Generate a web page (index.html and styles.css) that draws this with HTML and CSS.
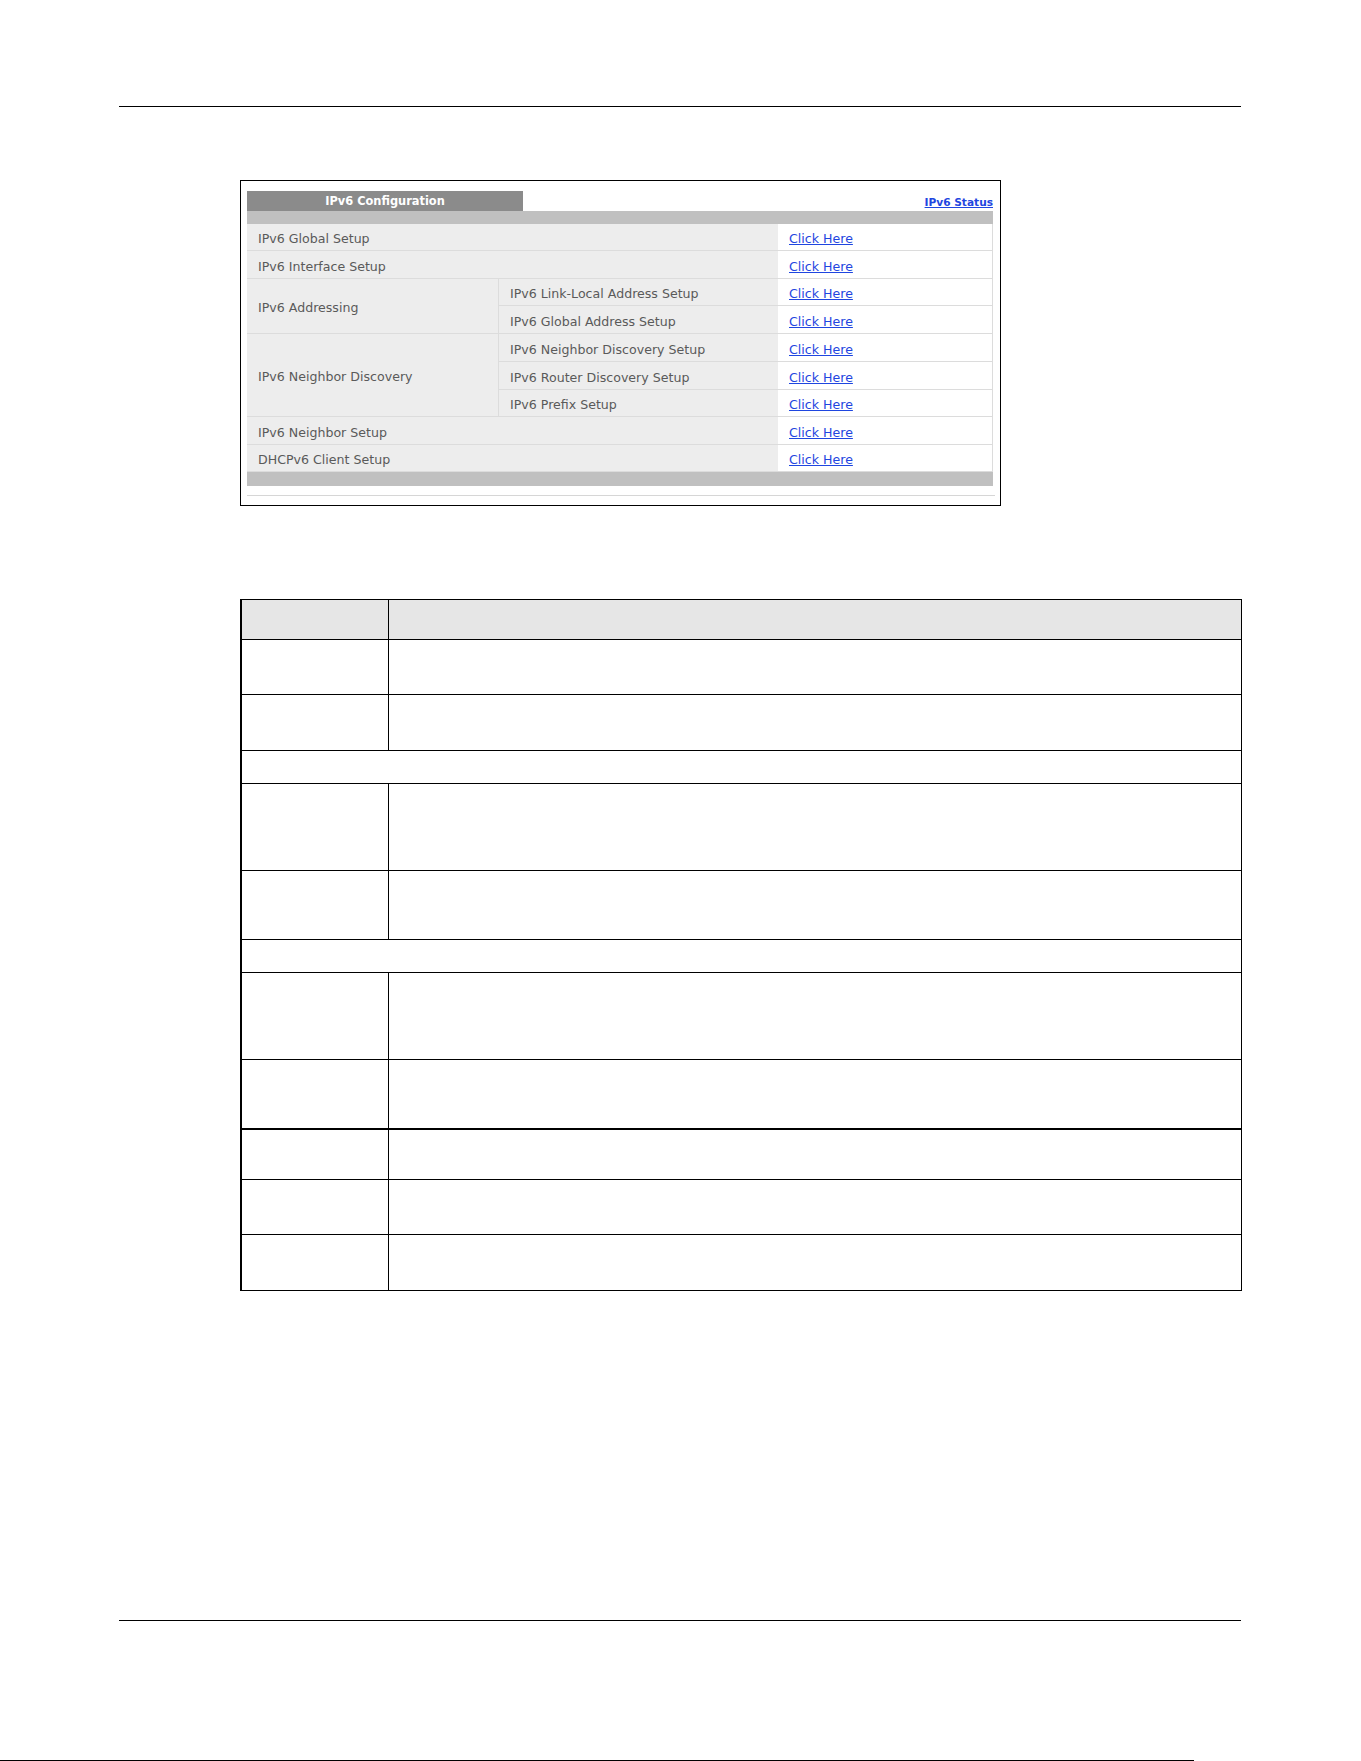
FILE: index.html
```html
<!DOCTYPE html>
<html lang="en">
<head>
  <title>IPv6 Configuration</title>
  <link rel="stylesheet" href="styles.css">
</head>
<body>
<div class="page">

  <div class="rule-top"></div>

  <!-- screen capture of the web configurator -->
  <div class="shot">
    <div class="tabs">
      <div class="tab">IPv6 Configuration</div>
      <a class="status" href="#">IPv6 Status</a>
    </div>
    <div class="bar-top"></div>

    <div class="cfg">
      <div class="lbl wide">IPv6 Global Setup</div>
      <div class="lnk"><a href="#">Click Here</a></div>

      <div class="lbl wide">IPv6 Interface Setup</div>
      <div class="lnk"><a href="#">Click Here</a></div>

      <div class="lbl group two">IPv6 Addressing</div>
      <div class="lbl">IPv6 Link-Local Address Setup</div>
      <div class="lnk"><a href="#">Click Here</a></div>
      <div class="lbl">IPv6 Global Address Setup</div>
      <div class="lnk"><a href="#">Click Here</a></div>

      <div class="lbl group three">IPv6 Neighbor Discovery</div>
      <div class="lbl">IPv6 Neighbor Discovery Setup</div>
      <div class="lnk"><a href="#">Click Here</a></div>
      <div class="lbl">IPv6 Router Discovery Setup</div>
      <div class="lnk"><a href="#">Click Here</a></div>
      <div class="lbl">IPv6 Prefix Setup</div>
      <div class="lnk"><a href="#">Click Here</a></div>

      <div class="lbl wide">IPv6 Neighbor Setup</div>
      <div class="lnk"><a href="#">Click Here</a></div>

      <div class="lbl wide">DHCPv6 Client Setup</div>
      <div class="lnk"><a href="#">Click Here</a></div>
    </div>

    <div class="bar-bottom"></div>
    <div class="shot-line"></div>
  </div>

  <!-- field description table, text left blank -->
  <div class="desc">
    <div class="row head h39"><div class="c1"></div><div class="c2"></div></div>
    <div class="row h54"><div class="c1"></div><div class="c2"></div></div>
    <div class="row h55"><div class="c1"></div><div class="c2"></div></div>
    <div class="row span h32"><div class="c-all"></div></div>
    <div class="row h86"><div class="c1"></div><div class="c2"></div></div>
    <div class="row h68"><div class="c1"></div><div class="c2"></div></div>
    <div class="row span h32"><div class="c-all"></div></div>
    <div class="row h86"><div class="c1"></div><div class="c2"></div></div>
    <div class="row h68"><div class="c1"></div><div class="c2"></div></div>
    <div class="row thick h49"><div class="c1"></div><div class="c2"></div></div>
    <div class="row h54"><div class="c1"></div><div class="c2"></div></div>
    <div class="row h55"><div class="c1"></div><div class="c2"></div></div>
  </div>

  <div class="rule-bottom"></div>
  <div class="next-page"></div>

</div>
</body>
</html>
```

FILE: styles.css
```css
* {
  box-sizing: border-box;
}

body {
  margin: 0;
  background: #fff;
  font-family: "DejaVu Sans", "Liberation Sans", sans-serif;
}

.page {
  width: 1361px;
  height: 1761px;
  padding-top: 106px;
  overflow: hidden;
}

.rule-top,
.rule-bottom {
  margin-left: 119px;
  width: 1122px;
  border-top: 1px solid #000;
}

/* screenshot box */
.shot {
  margin-top: 73px;
  margin-left: 240px;
  width: 761px;
  height: 326px;
  border: 1px solid #000;
  padding: 10px 0 0 6px;
}

.tabs {
  display: flex;
  justify-content: space-between;
  align-items: center;
  width: 746px;
  height: 20px;
}

.tab {
  width: 276px;
  height: 20px;
  line-height: 21px;
  background: #8b8b8b;
  color: #fff;
  font-size: 11.4px;
  font-weight: bold;
  text-align: center;
}

.status {
  color: #1f46e0;
  font-size: 10.6px;
  font-weight: bold;
  padding-top: 2px;
}

.bar-top {
  width: 746px;
  height: 13px;
  background: #c0c0c0;
}

.bar-bottom {
  width: 746px;
  height: 14px;
  background: #c0c0c0;
}

.shot-line {
  margin-top: 9px;
  width: 748px;
  border-top: 1px solid #d6d6d6;
}

.cfg {
  display: grid;
  grid-template-columns: 252px 279px 215px;
  grid-template-rows: 27px 28px 27px 28px 28px 28px 27px 28px 27px;
  width: 746px;
  font-size: 12.6px;
}

.lbl,
.lnk {
  display: flex;
  align-items: center;
  border-bottom: 1px solid #dcdcdc;
  padding-left: 11px;
  padding-top: 3px;
}

.lbl {
  background: #ededed;
  color: #5a5a5a;
}

.lnk {
  background: #fff;
  border-right: 1px solid #dcdcdc;
}

.lnk a {
  color: #1f46e0;
}

.wide {
  grid-column: span 2;
}

.group {
  border-right: 1px solid #dcdcdc;
}

.two {
  grid-row: span 2;
}

.three {
  grid-row: span 3;
}

/* description table */
.desc {
  margin-top: 93px;
  margin-left: 240px;
  width: 1002px;
  border: 1px solid #000;
  border-left-width: 2px;
}

.row {
  display: flex;
  border-top: 1px solid #000;
}

.row.head {
  border-top: none;
  background: #e6e6e6;
}

.row.thick {
  border-top: 2px solid #000;
}

.c1 {
  width: 147px;
  border-right: 1px solid #000;
}

.c2,
.c-all {
  flex: 1;
}

.h32 { height: 33px; }
.h39 { height: 39px; }
.h49 { height: 51px; }
.h54 { height: 55px; }
.h55 { height: 56px; }
.h68 { height: 69px; }
.h86 { height: 87px; }

.rule-bottom {
  margin-top: 329px;
}

.next-page {
  margin-top: 139px;
  width: 1194px;
  border-top: 1px solid #000;
}
```
